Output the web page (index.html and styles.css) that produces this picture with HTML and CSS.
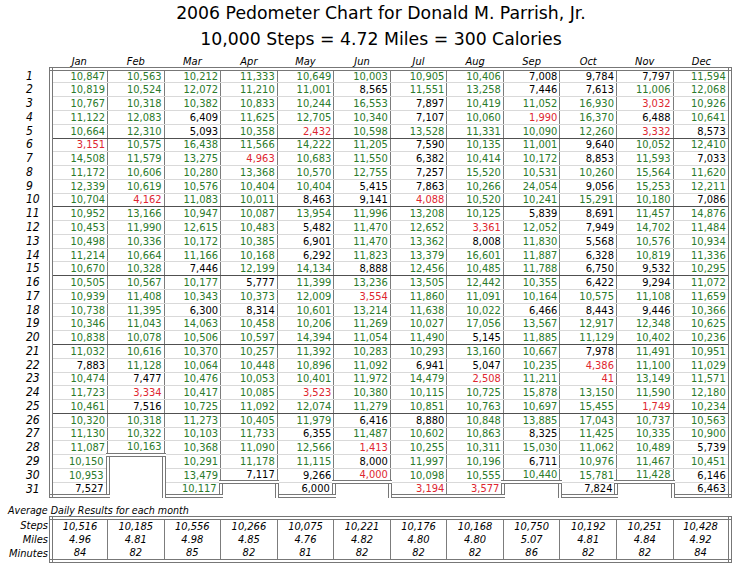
FILE: index.html
```html
<!DOCTYPE html>
<html lang="en">
<head>
<meta charset="utf-8">
<title>2006 Pedometer Chart</title>
<link rel="stylesheet" href="styles.css">
</head>
<body>
<h1 class="title"><span class="title-line">2006 Pedometer Chart for Donald M. Parrish, Jr.</span><span class="title-line">10,000 Steps = 4.72 Miles = 300 Calories</span></h1>
<div class="sheet">
<table class="chart">
<colgroup><col class="col-label"><col class="col-month"><col class="col-month"><col class="col-month"><col class="col-month"><col class="col-month"><col class="col-month"><col class="col-month"><col class="col-month"><col class="col-month"><col class="col-month"><col class="col-month"><col class="col-month"></colgroup>
<thead>
<tr class="head"><th class="corner"></th><th class="month">Jan</th><th class="month">Feb</th><th class="month">Mar</th><th class="month">Apr</th><th class="month">May</th><th class="month">Jun</th><th class="month">Jul</th><th class="month">Aug</th><th class="month">Sep</th><th class="month">Oct</th><th class="month">Nov</th><th class="month">Dec</th></tr>
</thead>
<tbody>
<tr><th class="day">1</th><td class="g">10,847</td><td class="g">10,563</td><td class="g">10,212</td><td class="g">11,333</td><td class="g">10,649</td><td class="g">10,003</td><td class="g">10,905</td><td class="g">10,406</td><td>7,008</td><td>9,784</td><td>7,797</td><td class="g">11,594</td></tr>
<tr><th class="day">2</th><td class="g">10,819</td><td class="g">10,524</td><td class="g">12,072</td><td class="g">11,210</td><td class="g">11,001</td><td>8,565</td><td class="g">11,551</td><td class="g">13,258</td><td>7,446</td><td>7,613</td><td class="g">11,006</td><td class="g">12,068</td></tr>
<tr><th class="day">3</th><td class="g">10,767</td><td class="g">10,318</td><td class="g">10,382</td><td class="g">10,833</td><td class="g">10,244</td><td class="g">16,553</td><td>7,897</td><td class="g">10,419</td><td class="g">11,052</td><td class="g">16,930</td><td class="r">3,032</td><td class="g">10,926</td></tr>
<tr><th class="day">4</th><td class="g">11,122</td><td class="g">12,083</td><td>6,409</td><td class="g">11,625</td><td class="g">12,705</td><td class="g">10,340</td><td>7,107</td><td class="g">10,060</td><td class="r">1,990</td><td class="g">16,370</td><td>6,488</td><td class="g">10,641</td></tr>
<tr class="grp"><th class="day">5</th><td class="g">10,664</td><td class="g">12,310</td><td>5,093</td><td class="g">10,358</td><td class="r">2,432</td><td class="g">10,598</td><td class="g">13,528</td><td class="g">11,331</td><td class="g">10,090</td><td class="g">12,260</td><td class="r">3,332</td><td>8,573</td></tr>
<tr><th class="day">6</th><td class="r">3,151</td><td class="g">10,575</td><td class="g">16,438</td><td class="g">11,566</td><td class="g">14,222</td><td class="g">11,205</td><td>7,590</td><td class="g">10,135</td><td class="g">11,001</td><td>9,640</td><td class="g">10,052</td><td class="g">12,410</td></tr>
<tr><th class="day">7</th><td class="g">14,508</td><td class="g">11,579</td><td class="g">13,275</td><td class="r">4,963</td><td class="g">10,683</td><td class="g">11,550</td><td>6,382</td><td class="g">10,414</td><td class="g">10,172</td><td>8,853</td><td class="g">11,593</td><td>7,033</td></tr>
<tr><th class="day">8</th><td class="g">11,172</td><td class="g">10,606</td><td class="g">10,280</td><td class="g">13,368</td><td class="g">10,570</td><td class="g">12,755</td><td>7,257</td><td class="g">15,520</td><td class="g">10,531</td><td class="g">10,260</td><td class="g">15,564</td><td class="g">11,620</td></tr>
<tr><th class="day">9</th><td class="g">12,339</td><td class="g">10,619</td><td class="g">10,576</td><td class="g">10,404</td><td class="g">10,404</td><td>5,415</td><td>7,863</td><td class="g">10,266</td><td class="g">24,054</td><td>9,056</td><td class="g">15,253</td><td class="g">12,211</td></tr>
<tr class="grp"><th class="day">10</th><td class="g">10,704</td><td class="r">4,162</td><td class="g">11,083</td><td class="g">10,011</td><td>8,463</td><td>9,141</td><td class="r">4,088</td><td class="g">10,520</td><td class="g">10,241</td><td class="g">15,291</td><td class="g">10,180</td><td>7,086</td></tr>
<tr><th class="day">11</th><td class="g">10,952</td><td class="g">13,166</td><td class="g">10,947</td><td class="g">10,087</td><td class="g">13,954</td><td class="g">11,996</td><td class="g">13,208</td><td class="g">10,125</td><td>5,839</td><td>8,691</td><td class="g">11,457</td><td class="g">14,876</td></tr>
<tr><th class="day">12</th><td class="g">10,453</td><td class="g">11,990</td><td class="g">12,615</td><td class="g">10,483</td><td>5,482</td><td class="g">11,470</td><td class="g">12,652</td><td class="r">3,361</td><td class="g">12,052</td><td>7,949</td><td class="g">14,702</td><td class="g">11,484</td></tr>
<tr><th class="day">13</th><td class="g">10,498</td><td class="g">10,336</td><td class="g">10,172</td><td class="g">10,385</td><td>6,901</td><td class="g">11,470</td><td class="g">13,362</td><td>8,008</td><td class="g">11,830</td><td>5,568</td><td class="g">10,576</td><td class="g">10,934</td></tr>
<tr><th class="day">14</th><td class="g">11,214</td><td class="g">10,664</td><td class="g">11,166</td><td class="g">10,168</td><td>6,292</td><td class="g">11,823</td><td class="g">13,379</td><td class="g">16,601</td><td class="g">11,887</td><td>6,328</td><td class="g">10,819</td><td class="g">11,336</td></tr>
<tr class="grp"><th class="day">15</th><td class="g">10,670</td><td class="g">10,328</td><td>7,446</td><td class="g">12,199</td><td class="g">14,134</td><td>8,888</td><td class="g">12,456</td><td class="g">10,485</td><td class="g">11,788</td><td>6,750</td><td>9,532</td><td class="g">10,295</td></tr>
<tr><th class="day">16</th><td class="g">10,505</td><td class="g">10,567</td><td class="g">10,177</td><td>5,777</td><td class="g">11,399</td><td class="g">13,236</td><td class="g">13,505</td><td class="g">12,442</td><td class="g">10,355</td><td>6,422</td><td>9,294</td><td class="g">11,072</td></tr>
<tr><th class="day">17</th><td class="g">10,939</td><td class="g">11,408</td><td class="g">10,343</td><td class="g">10,373</td><td class="g">12,009</td><td class="r">3,554</td><td class="g">11,860</td><td class="g">11,091</td><td class="g">10,164</td><td class="g">10,575</td><td class="g">11,108</td><td class="g">11,659</td></tr>
<tr><th class="day">18</th><td class="g">10,738</td><td class="g">11,395</td><td>6,300</td><td>8,314</td><td class="g">10,601</td><td class="g">13,214</td><td class="g">11,638</td><td class="g">10,022</td><td>6,466</td><td>8,443</td><td>9,446</td><td class="g">10,366</td></tr>
<tr><th class="day">19</th><td class="g">10,346</td><td class="g">11,043</td><td class="g">14,063</td><td class="g">10,458</td><td class="g">10,206</td><td class="g">11,269</td><td class="g">10,027</td><td class="g">17,056</td><td class="g">13,567</td><td class="g">12,917</td><td class="g">12,348</td><td class="g">10,625</td></tr>
<tr class="grp"><th class="day">20</th><td class="g">10,838</td><td class="g">10,078</td><td class="g">10,506</td><td class="g">10,597</td><td class="g">14,394</td><td class="g">11,054</td><td class="g">11,490</td><td>5,145</td><td class="g">11,885</td><td class="g">11,129</td><td class="g">10,402</td><td class="g">10,236</td></tr>
<tr><th class="day">21</th><td class="g">11,032</td><td class="g">10,616</td><td class="g">10,370</td><td class="g">10,257</td><td class="g">11,392</td><td class="g">10,283</td><td class="g">10,293</td><td class="g">13,160</td><td class="g">10,667</td><td>7,978</td><td class="g">11,491</td><td class="g">10,951</td></tr>
<tr><th class="day">22</th><td>7,883</td><td class="g">11,128</td><td class="g">10,064</td><td class="g">10,448</td><td class="g">10,896</td><td class="g">11,092</td><td>6,941</td><td>5,047</td><td class="g">10,235</td><td class="r">4,386</td><td class="g">11,100</td><td class="g">11,029</td></tr>
<tr><th class="day">23</th><td class="g">10,474</td><td>7,477</td><td class="g">10,476</td><td class="g">10,053</td><td class="g">10,401</td><td class="g">11,972</td><td class="g">14,479</td><td class="r">2,508</td><td class="g">11,211</td><td class="r">41</td><td class="g">13,149</td><td class="g">11,571</td></tr>
<tr><th class="day">24</th><td class="g">11,723</td><td class="r">3,334</td><td class="g">10,417</td><td class="g">10,085</td><td class="r">3,523</td><td class="g">10,380</td><td class="g">10,115</td><td class="g">10,725</td><td class="g">15,878</td><td class="g">13,150</td><td class="g">11,590</td><td class="g">12,180</td></tr>
<tr class="grp"><th class="day">25</th><td class="g">10,461</td><td>7,516</td><td class="g">10,725</td><td class="g">11,092</td><td class="g">12,074</td><td class="g">11,279</td><td class="g">10,851</td><td class="g">10,763</td><td class="g">10,697</td><td class="g">15,455</td><td class="r">1,749</td><td class="g">10,234</td></tr>
<tr><th class="day">26</th><td class="g">10,320</td><td class="g">10,318</td><td class="g">11,273</td><td class="g">10,405</td><td class="g">11,979</td><td>6,416</td><td>8,880</td><td class="g">10,848</td><td class="g">13,885</td><td class="g">17,043</td><td class="g">10,737</td><td class="g">10,563</td></tr>
<tr><th class="day">27</th><td class="g">11,130</td><td class="g">10,322</td><td class="g">10,103</td><td class="g">11,733</td><td>6,355</td><td class="g">11,487</td><td class="g">10,602</td><td class="g">10,863</td><td>8,325</td><td class="g">11,425</td><td class="g">10,335</td><td class="g">10,900</td></tr>
<tr><th class="day">28</th><td class="g">11,087</td><td class="g end">10,163</td><td class="g">10,368</td><td class="g">11,090</td><td class="g">12,566</td><td class="r">1,413</td><td class="g">10,255</td><td class="g">10,311</td><td class="g">15,030</td><td class="g">11,062</td><td class="g">10,489</td><td>5,739</td></tr>
<tr><th class="day">29</th><td class="g">10,150</td><td class="x"></td><td class="g">10,291</td><td class="g">11,178</td><td class="g">11,115</td><td>8,000</td><td class="g">11,997</td><td class="g">10,196</td><td>6,711</td><td class="g">10,976</td><td class="g">11,467</td><td class="g">10,451</td></tr>
<tr><th class="day">30</th><td class="g">10,953</td><td class="x"></td><td class="g">13,479</td><td class="end">7,117</td><td>9,266</td><td class="r end">4,000</td><td class="g">10,098</td><td class="g">10,555</td><td class="g end">10,440</td><td class="g">15,781</td><td class="g end">11,428</td><td>6,146</td></tr>
<tr><th class="day">31</th><td class="end">7,527</td><td class="x"></td><td class="g end">10,117</td><td class="x"></td><td class="end">6,000</td><td class="x"></td><td class="r end">3,194</td><td class="r end">3,577</td><td class="x"></td><td class="end">7,824</td><td class="x"></td><td class="end">6,463</td></tr>
</tbody>
</table>
<p class="avg-caption">Average Daily Results for each month</p>
<table class="avg">
<colgroup><col class="col-label"><col class="col-month"><col class="col-month"><col class="col-month"><col class="col-month"><col class="col-month"><col class="col-month"><col class="col-month"><col class="col-month"><col class="col-month"><col class="col-month"><col class="col-month"><col class="col-month"></colgroup>
<tbody>
<tr><th class="measure">Steps</th><td>10,516</td><td>10,185</td><td>10,556</td><td>10,266</td><td>10,075</td><td>10,221</td><td>10,176</td><td>10,168</td><td>10,750</td><td>10,192</td><td>10,251</td><td>10,428</td></tr>
<tr><th class="measure">Miles</th><td>4.96</td><td>4.81</td><td>4.98</td><td>4.85</td><td>4.76</td><td>4.82</td><td>4.80</td><td>4.80</td><td>5.07</td><td>4.81</td><td>4.84</td><td>4.92</td></tr>
<tr><th class="measure">Minutes</th><td>84</td><td>82</td><td>85</td><td>82</td><td>81</td><td>82</td><td>82</td><td>82</td><td>86</td><td>82</td><td>82</td><td>84</td></tr>
</tbody>
</table>
</div>
</body>
</html>
```
FILE: styles.css
```css
* { box-sizing: border-box; }
html, body { margin: 0; padding: 0; background: #ffffff; }
body {
  font-family: "DejaVu Sans", Verdana, sans-serif;
  color: #000000;
  width: 740px;
  height: 566px;
  overflow: hidden;
}
.title {
  margin: 0;
  padding-left: 22px;
  text-align: center;
  font-size: 17.3px;
  font-weight: normal;
  line-height: 26px;
}
.title-line { display: block; }
.sheet {
  padding: 0 8px;
  font-family: "DejaVu Sans Condensed", "DejaVu Sans", sans-serif;
  font-stretch: condensed;
}

.chart, .avg {
  border-collapse: collapse;
  table-layout: fixed;
  width: 723.7px;
}
.col-label { width: 43px; }
.col-month { width: 56.56px; }

/* header */
.chart .head { height: 17.2px; }
.chart th.month {
  font-style: italic;
  font-weight: normal;
  font-size: 11px;
  line-height: 10px;
  vertical-align: bottom;
  text-align: center;
  padding: 0;
}
.chart th.corner { padding: 0; }

/* day rows */
.chart tbody tr { height: 13.78px; }
.chart th.day {
  font-style: italic;
  font-weight: normal;
  font-size: 12px;
  line-height: 11px;
  text-align: left;
  padding: 0 0 0 18px;
  vertical-align: middle;
}
.chart td {
  font-size: 11px;
  line-height: 11px;
  text-align: right;
  vertical-align: middle;
  padding: 0 2px 0 0;
  white-space: nowrap;
  border-right: 1px solid #7c7c7c;
  border-bottom: 1px solid #d9d9d9;
}
.chart tr.grp td { border-bottom: 1px solid #505050; }
.chart tbody tr:first-child td { border-top: 4px double #777777; }
.chart td:nth-child(2) { border-left: 4px double #777777; }
.chart td:last-child { border-right: 4px double #777777; }
.chart td.end { border-bottom: 4px double #777777; }
.chart td.x {
  border-left: 4px double #777777;
  border-right: 4px double #777777;
  border-bottom: none;
}
.g { color: #2b7a2b; }
.r { color: #de2630; }

/* averages */
.avg-caption {
  margin: 6px 0 0;
  height: 12px;
  font-style: italic;
  font-size: 10.6px;
  line-height: 12px;
}
.avg th.measure {
  font-style: italic;
  font-weight: normal;
  font-size: 11px;
  line-height: 13px;
  text-align: right;
  padding: 0 1px 0 0;
  vertical-align: middle;
}
.avg td {
  font-style: italic;
  font-size: 11px;
  line-height: 13px;
  text-align: center;
  vertical-align: middle;
  padding: 0;
  border-left: 1px solid #7c7c7c;
  border-right: 1px solid #7c7c7c;
}
.avg tr:first-child td { border-top: 4px double #777777; }
.avg tr:last-child td { border-bottom: 4px double #777777; }
.avg td:nth-child(2) { border-left: 4px double #777777; }
.avg td:last-child { border-right: 4px double #777777; }
```
